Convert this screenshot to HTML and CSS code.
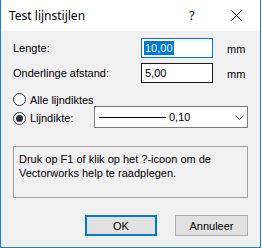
FILE: index.html
```html
<!DOCTYPE html>
<html>
<head>
<meta charset="utf-8">
<link rel="stylesheet" href="styles.css">
</head>
<body>
<div class="window">
  <div class="titlebar">
    <span class="title">Test lijnstijlen</span>
    <span class="help">?</span>
    <span class="close">
      <svg width="11" height="11" viewBox="0 0 11 11"><path d="M0.5 0.5 L10.5 10.5 M10.5 0.5 L0.5 10.5" stroke="#000" stroke-width="1" fill="none"/></svg>
    </span>
  </div>
  <div class="content">
    <div class="fields">
      <label class="lbl">Lengte:</label>
      <div class="input active"><span class="sel">10,00</span></div>
      <span class="unit">mm</span>
      <label class="lbl">Onderlinge afstand:</label>
      <div class="input dark">5,00</div>
      <span class="unit">mm</span>
    </div>
    <div class="radios">
      <div class="radio-row">
        <span class="radio"></span><span class="rlbl">Alle lijndiktes</span>
      </div>
      <div class="radio-row second">
        <div class="radio-opt"><span class="radio checked"></span><span class="rlbl">Lijndikte:</span></div>
        <div class="select">
          <span class="line"></span>
          <span class="val">0,10</span>
          <svg class="chev" width="9" height="5" viewBox="0 0 9 5"><path d="M0.5 0.5 L4.5 4.5 L8.5 0.5" stroke="#444" stroke-width="1" fill="none"/></svg>
        </div>
      </div>
    </div>
    <div class="helpbox">Druk op F1 of klik op het ?-icoon om de Vectorworks help te raadplegen.</div>
    <div class="buttons">
      <button class="btn default">OK</button>
      <button class="btn">Annuleer</button>
    </div>
  </div>
</div>
</body>
</html>
```
FILE: styles.css
```css
html, body {
  margin: 0;
  padding: 0;
  background: #ffffff;
}
.window {
  width: 261px;
  height: 248px;
  box-sizing: border-box;
  border: 1px solid #1a7fd4;
  border-top: none;
  background: #f0f0f0;
  display: flex;
  flex-direction: column;
  font-family: "Liberation Sans", Arial, sans-serif;
  font-size: 11px;
  color: #000;
}
.titlebar {
  height: 31px;
  flex: none;
  background: #fff;
  display: flex;
  align-items: center;
  font-family: "Noto Sans", "Open Sans", sans-serif;
  font-size: 12px;
}
.title {
  padding-left: 8px;
  flex: 1;
  padding-bottom: 1px;
}
.help {
  width: 12px;
  margin-right: 30px;
  font-size: 13px;
  padding-bottom: 1px;
}
.close {
  width: 11px;
  height: 11px;
  margin-right: 18px;
  display: flex;
}
.content {
  flex: 1;
  display: flex;
  flex-direction: column;
  padding: 7px 12px 0 12px;
}
.fields {
  display: grid;
  grid-template-columns: 128px 72px auto;
  grid-template-rows: 20px 20px;
  row-gap: 5px;
  column-gap: 0;
  align-items: center;
}
.lbl {
  padding-bottom: 1px;
}
.unit {
  padding-left: 14px;
  padding-top: 2px;
}
.input {
  height: 20px;
  box-sizing: border-box;
  background: #fff;
  border: 1px solid #000;
  display: flex;
  align-items: center;
  padding-left: 2px;
}
.input.active {
  border-color: #0078d7;
}
.input.dark {
  border-color: #1a1a1a;
  padding-left: 3px;
}
.sel {
  background: #0078d7;
  color: #fff;
  line-height: 14px;
  padding: 0 1px 0 1px;
}
.radios {
  margin-top: 10px;
  display: flex;
  flex-direction: column;
}
.radio-row {
  display: flex;
  align-items: center;
  height: 13px;
}
.radio-row.second {
  height: 22px;
  margin-top: 0;
}
.radio-opt {
  width: 81px;
  display: flex;
  align-items: center;
  padding-top: 2px;
}
.radio {
  width: 13px;
  height: 13px;
  box-sizing: border-box;
  border: 1px solid #333;
  border-radius: 50%;
  background: #fff;
  display: flex;
  align-items: center;
  justify-content: center;
  flex: none;
}
.radio.checked::after {
  content: "";
  width: 7px;
  height: 7px;
  border-radius: 50%;
  background: #333;
}
.rlbl {
  margin-left: 4px;
}
.select {
  width: 154px;
  height: 22px;
  box-sizing: border-box;
  border: 1px solid #7a7a7a;
  background: #fff;
  display: flex;
  align-items: center;
  padding-left: 4px;
  padding-right: 3px;
}
.line {
  width: 67px;
  height: 1px;
  background: #000;
  margin-top: 1px;
}
.val {
  margin-left: 3px;
  flex: 1;
}
.chev {
  margin-top: 1px;
}
.helpbox {
  margin-top: 18px;
  height: 52px;
  box-sizing: border-box;
  border: 1px solid #a0a0a0;
  padding: 5px 5px 0 5px;
  line-height: 14px;
}
.buttons {
  margin-top: 17px;
  display: flex;
  justify-content: flex-end;
  gap: 18px;
}
.btn {
  width: 73px;
  height: 21px;
  box-sizing: border-box;
  background: #e1e1e1;
  border: 1px solid #adadad;
  font-family: "Liberation Sans", Arial, sans-serif;
  font-size: 11px;
  color: #000;
  padding: 0;
  margin: 0;
}
.btn.default {
  width: 72px;
  border: 2px solid #0078d7;
}
```
